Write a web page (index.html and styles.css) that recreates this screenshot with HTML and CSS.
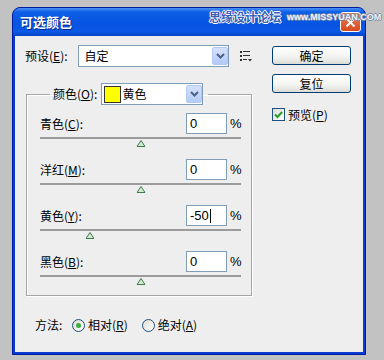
FILE: index.html
```html
<!DOCTYPE html>
<html lang="zh-CN">
  <head>
    <meta charset="UTF-8" />
    <meta name="viewport" content="width=device-width, initial-scale=1.0" />
    <title>可选颜色</title>
    <link rel="stylesheet" href="styles.css">
  </head>
  <body>
    <div class="window">
      <div class="titlebar">
        <span class="title">可选颜色</span>
        <button class="close-btn" aria-label="关闭">
          <svg width="11" height="11" viewBox="0 0 11 11">
            <path d="M1.5 1.5l8 8M9.5 1.5l-8 8" stroke="#fff" stroke-width="2" />
          </svg>
        </button>
      </div>

      <!-- forum watermark over the title bar -->
      <div class="watermark">
        <span class="wm-cn">思缘设计论坛</span>
        <span class="wm-en">www.MISSYUAN.COM</span>
      </div>

      <div class="client">
        <div class="main-col">
          <div class="preset-row">
            <span class="preset-label">预设(<u>E</u>):</span>
            <div class="combo preset-combo">
              <span class="combo-text">自定</span>
              <span class="combo-arrow">
                <svg width="9" height="6" viewBox="0 0 9 6"><path d="M1 1l3.5 3.5L8 1" fill="none" stroke="#4d6185" stroke-width="2" /></svg>
              </span>
            </div>
            <span class="options-icon">
              <svg width="12" height="11" viewBox="0 0 12 11">
                <g fill="#333">
                  <rect x="0" y="0" width="2" height="2" />
                  <rect x="3" y="0" width="7" height="1" />
                  <rect x="0" y="4" width="2" height="2" />
                  <rect x="3" y="4" width="7" height="1" />
                  <rect x="0" y="8" width="2" height="2" />
                  <rect x="3" y="8" width="4" height="1" />
                  <path d="M8 8h4l-2 2.5z" />
                </g>
              </svg>
            </span>
          </div>

          <fieldset class="group">
            <legend class="group-legend">
              <span>颜色(<u>O</u>):</span>
              <div class="combo color-combo">
                <span class="swatch"></span>
                <span class="combo-text">黄色</span>
                <span class="combo-arrow">
                  <svg width="9" height="6" viewBox="0 0 9 6"><path d="M1 1l3.5 3.5L8 1" fill="none" stroke="#4d6185" stroke-width="2" /></svg>
                </span>
              </div>
            </legend>

            <div class="channel">
              <div class="channel-head">
                <span class="channel-label">青色(<u>C</u>):</span>
                <span class="value">0</span>
                <span class="pct">%</span>
              </div>
              <div class="slider">
                <span class="thumb" style="left: 50%"><svg width="9" height="7" viewBox="0 0 9 7"><path d="M4.5 0.5L8.5 6.5H0.5z" fill="#d4ead0" stroke="#3f7a4c" /></svg></span>
              </div>
            </div>

            <div class="channel">
              <div class="channel-head">
                <span class="channel-label">洋红(<u>M</u>):</span>
                <span class="value">0</span>
                <span class="pct">%</span>
              </div>
              <div class="slider">
                <span class="thumb" style="left: 50%"><svg width="9" height="7" viewBox="0 0 9 7"><path d="M4.5 0.5L8.5 6.5H0.5z" fill="#d4ead0" stroke="#3f7a4c" /></svg></span>
              </div>
            </div>

            <div class="channel">
              <div class="channel-head">
                <span class="channel-label">黄色(<u>Y</u>):</span>
                <span class="value">-50<span class="caret"></span></span>
                <span class="pct">%</span>
              </div>
              <div class="slider">
                <span class="thumb" style="left: 25%"><svg width="9" height="7" viewBox="0 0 9 7"><path d="M4.5 0.5L8.5 6.5H0.5z" fill="#d4ead0" stroke="#3f7a4c" /></svg></span>
              </div>
            </div>

            <div class="channel">
              <div class="channel-head">
                <span class="channel-label">黑色(<u>B</u>):</span>
                <span class="value">0</span>
                <span class="pct">%</span>
              </div>
              <div class="slider">
                <span class="thumb" style="left: 50%"><svg width="9" height="7" viewBox="0 0 9 7"><path d="M4.5 0.5L8.5 6.5H0.5z" fill="#d4ead0" stroke="#3f7a4c" /></svg></span>
              </div>
            </div>
          </fieldset>

          <div class="method-row">
            <span class="method-label">方法:</span>
            <span class="radio checked"></span>
            <span class="radio-text">相对(<u>R</u>)</span>
            <span class="radio second"></span>
            <span class="radio-text">绝对(<u>A</u>)</span>
          </div>
        </div>

        <div class="side-col">
          <button class="btn">确定</button>
          <button class="btn btn-reset">复位</button>
          <div class="check-row">
            <span class="checkbox">
              <svg width="9" height="8" viewBox="0 0 9 8"><path d="M1 3.5l2.5 2.5L8 1" fill="none" stroke="#21a121" stroke-width="2" /></svg>
            </span>
            <span class="check-text">预览(<u>P</u>)</span>
          </div>
        </div>
      </div>
    </div>
  </body>
</html>
```

FILE: styles.css
```css
html {
  background: #c2c2c2;
}

body {
  margin: 0;
  padding: 7px 0 0 12px;
  font-family: "Noto Sans CJK SC", sans-serif;
  font-size: 12px;
  line-height: 16px;
  color: #000;
}

u {
  text-underline-offset: 1px;
}

/* Window frame */
.window {
  position: relative;
  width: 354px;
  height: 348px;
  box-sizing: border-box;
  border: 1px solid #001c9a;
  border-radius: 8px 8px 0 0;
  background: #0b3ad2;
  padding: 0 2px 2px;
  display: flex;
  flex-direction: column;
}

.titlebar {
  height: 28px;
  margin: 0 -2px;
  padding: 0 4px 0 7px;
  display: flex;
  align-items: center;
  justify-content: space-between;
  border-radius: 7px 7px 0 0;
  background: linear-gradient(#4a92f7 0%, #0e5fe8 14%, #0654e2 55%, #0a58e4 85%, #0843c6 100%);
}

.title {
  color: #fff;
  font-weight: bold;
  font-size: 13px;
  text-shadow: 1px 1px #0a2a8a;
}

.close-btn {
  width: 21px;
  height: 20px;
  padding: 0;
  border: 1px solid #fff;
  border-radius: 3px;
  background: linear-gradient(#ea7f58, #d84a20);
  display: flex;
  align-items: center;
  justify-content: center;
}

.watermark {
  position: absolute;
  left: 196px;
  top: 1px;
  display: flex;
  align-items: center;
  gap: 6px;
  white-space: nowrap;
}

.wm-cn {
  font-size: 12px;
  font-weight: bold;
  color: #3b5fb6;
  text-shadow: 1px 0 #fff, -1px 0 #fff, 0 1px #fff, 0 -1px #fff;
}

.wm-en {
  font-family: "Liberation Sans", sans-serif;
  font-size: 9px;
  font-weight: bold;
  color: #eef1f8;
  text-shadow: 1px 0 #7d8aa8, -1px 0 #7d8aa8, 0 1px #7d8aa8, 0 -1px #7d8aa8;
}

/* Client area */
.client {
  flex: 1;
  background: #eeeeee;
  display: grid;
  grid-template-columns: 227px 79px;
  column-gap: 20px;
  align-content: start;
  align-items: start;
  padding: 9px 12px 0 10px;
}

.preset-row {
  display: flex;
  align-items: center;
  height: 22px;
}

.preset-label {
  width: 54px;
}

.combo {
  height: 22px;
  box-sizing: border-box;
  border: 1px solid #7f9db9;
  background: #fff;
  display: flex;
  align-items: center;
}

.preset-combo {
  width: 152px;
  padding-left: 5px;
}

.combo-arrow {
  margin-left: auto;
  width: 16px;
  height: 18px;
  box-sizing: border-box;
  border: 1px solid #b3c8f5;
  border-radius: 2px;
  background: linear-gradient(#d4e1fc, #b4caf8);
  display: flex;
  align-items: center;
  justify-content: center;
}

.options-icon {
  margin-left: 11px;
  display: flex;
}

/* Color group */
.group {
  margin: 16px 0 0 1px;
  padding: 8px 10px 18px 13px;
  width: 226px;
  min-width: 0;
  box-sizing: border-box;
  border: 1px solid #a6a6a6;
  box-shadow: 1px 1px 0 #fff, inset 1px 1px 0 #fff;
}

.group-legend {
  margin-left: 10px;
  padding: 0 5px 0 3px;
  display: flex;
  align-items: center;
  gap: 4px;
}

.color-combo {
  width: 102px;
  padding-left: 2px;
}

.swatch {
  width: 17px;
  height: 17px;
  box-sizing: border-box;
  border: 1px solid #333;
  background: #ffff00;
  margin-right: 1px;
}

.channel-head {
  display: flex;
  align-items: center;
  height: 21px;
}

.channel-label {
  flex: 1;
}

.value {
  width: 41px;
  height: 21px;
  box-sizing: border-box;
  border: 1px solid #7f9db9;
  background: #fff;
  padding-left: 3px;
  font-family: "Liberation Sans", sans-serif;
  font-size: 13px;
  line-height: 19px;
  display: flex;
  align-items: center;
}

.caret {
  width: 1px;
  height: 14px;
  background: #000;
  margin-left: 1px;
}

.pct {
  width: 11px;
  margin-left: 3px;
  font-family: "Liberation Sans", sans-serif;
  font-size: 13px;
}

.slider {
  position: relative;
  height: 0;
  border-top: 2px solid #9b9b9b;
  margin: 3px 0 20px;
}

.channel:last-child .slider {
  margin-bottom: 0;
}

.thumb {
  position: absolute;
  top: 1px;
  transform: translateX(-50%);
  display: flex;
}

/* Method radios */
.method-row {
  display: flex;
  align-items: center;
  height: 16px;
  margin-top: 21px;
  padding-left: 10px;
}

.method-label {
  width: 37px;
}

.radio {
  width: 13px;
  height: 13px;
  box-sizing: border-box;
  border: 1px solid #1c5180;
  border-radius: 50%;
  background: linear-gradient(135deg, #dcdcd4, #fff);
  display: flex;
  align-items: center;
  justify-content: center;
}

.radio.checked::after {
  content: "";
  width: 5px;
  height: 5px;
  border-radius: 50%;
  background: #3dae3d;
}

.radio-text {
  margin-left: 3px;
}

.radio.second {
  margin-left: 14px;
}

/* Side buttons */
.btn {
  display: block;
  width: 79px;
  height: 19px;
  margin-top: 1px;
  padding: 0;
  border: 1px solid #003c74;
  border-radius: 3px;
  background: linear-gradient(#ffffff, #f2f2f0 60%, #dcdcd6);
  font-family: inherit;
  font-size: 12px;
  line-height: 16px;
  color: #000;
}

.btn-reset {
  margin-top: 9px;
}

.check-row {
  display: flex;
  align-items: center;
  margin-top: 15px;
  height: 13px;
}

.checkbox {
  width: 13px;
  height: 13px;
  box-sizing: border-box;
  border: 1px solid #1c5180;
  background: linear-gradient(135deg, #dcdcd4, #fff);
  display: flex;
  align-items: center;
  justify-content: center;
}

.check-text {
  margin-left: 3px;
}
```
